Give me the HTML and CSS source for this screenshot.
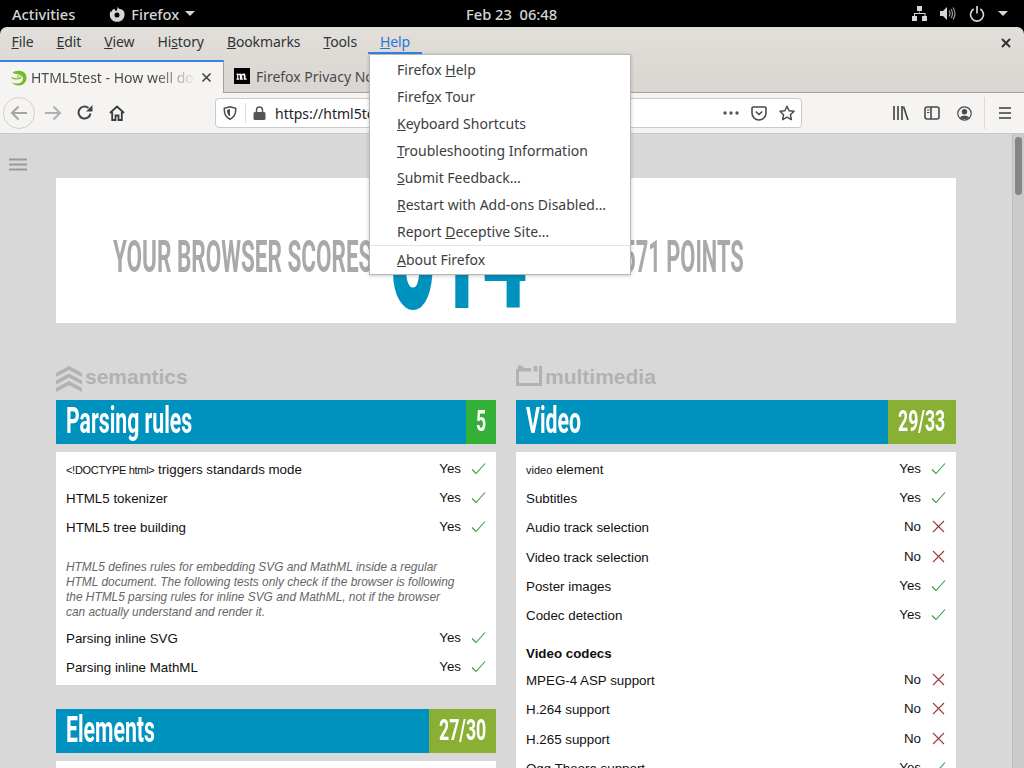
FILE: index.html
```html
<!DOCTYPE html>
<html lang="en">
<head>
    <meta charset="UTF-8">
    <title>HTML5test - How well does your browser support HTML5?</title>
    <link rel="stylesheet" href="styles.css">
</head>
<body>
    <svg class="defs" width="0" height="0">
        <symbol id="check" viewBox="0 0 15 13"><path d="M1 7.5l4 4L14 1.5" fill="none" stroke="#3a9a3c" stroke-width="1.1"/></symbol>
        <symbol id="cross" viewBox="0 0 13 13"><path d="M1 1l11 11M12 1L1 12" fill="none" stroke="#9a3a3c" stroke-width="1.1"/></symbol>
    </svg>

    <header class="topbar">
        <span class="activities">Activities</span>
        <span class="app-menu">
            <svg width="16" height="16" viewBox="0 0 16 16"><path d="M8.5 0.5c.3 1.3 1 2 2.2 2.6C12.4 3 14 4 15 5.5c1.300 3.500 .3 7-2.300 9C10 16.300 6 16.300 3.300 14.300.5 12 0 8 1.800 5l1 .7.600-2c.7-.5 1.500-.8 2.300-1-.2 1.200.5 2 1.300 2.300C8.800 4.500 8.200 2.500 8.500.5zM8 6.500A2.500 2.500 0 1 0 10.500 9 2.500 2.500 0 0 0 8 6.500z" fill="#d6d6d6"/></svg>
            <span>Firefox</span>
            <i class="caret"></i>
        </span>
        <span class="clock">Feb 23&nbsp; 06:48</span>
        <span class="tray">
            <svg width="15" height="15" viewBox="0 0 15 15" fill="#d6d6d6"><path d="M5 0h5v5H8v2h5.500v3h1.500v5h-5v-5h2.500V8H3v2h2v5H0v-5h2V7h5.500V5H5z"/></svg>
            <svg width="16" height="15" viewBox="0 0 16 15"><path d="M0 5h3l4-4v13l-4-4H0z" fill="#d6d6d6"/><path d="M9 4.500q2 3 0 6M11 3q3 4.500 0 9M13 1.500q4 6 0 12" fill="none" stroke="#9a9a9a" stroke-width="1.200"/></svg>
            <svg width="16" height="16" viewBox="0 0 16 16"><path d="M4.700 3A6.500 6.500 0 1 0 11.300 3M8 0v7.500" fill="none" stroke="#d6d6d6" stroke-width="1.700"/></svg>
            <i class="caret"></i>
        </span>
    </header>

    <div class="window">
        <div class="chrome-top">
            <nav class="menubar">
                <span><u>F</u>ile</span>
                <span><u>E</u>dit</span>
                <span><u>V</u>iew</span>
                <span>Hi<u>s</u>tory</span>
                <span><u>B</u>ookmarks</span>
                <span><u>T</u>ools</span>
                <span class="open"><u>H</u>elp</span>
                <svg class="win-close" width="10" height="10" viewBox="0 0 10 10"><path d="M1 1l8 8M9 1L1 9" stroke="#2e3436" stroke-width="2"/></svg>
            </nav>

            <div class="tabs">
                <div class="tab active">
                    <svg class="favicon" width="16" height="16" viewBox="0 0 16 16"><path d="M1.500 2.500C3 1.500 5 .8 8 .8c4.500 0 7.500 3 7.500 7.200S12 15.500 8 15.500C4.500 15.500 2 14 .5 12.500c3 1 6.500 1.300 9 .2 1.500-.8 2.500-2.200 2.500-4.200 0-3-2.500-4.500-5-4.500-2 0-4-.5-5.500-1.500z" fill="#73ba25"/><path d="M.5 7.500c2.500 1.500 6 1.800 9 .5" fill="none" stroke="#73ba25" stroke-width="1.300"/><circle cx="8.500" cy="6.500" r="1.800" fill="none" stroke="#73ba25"/></svg>
                    <span class="tab-title">HTML5test - How well does your browser</span>
                    <svg class="tab-close" width="11" height="11" viewBox="0 0 11 11"><path d="M1.500 1.500l8 8M9.500 1.500l-8 8" stroke="#3b3b3b" stroke-width="1.500"/></svg>
                </div>
                <div class="tab">
                    <svg class="favicon" width="16" height="16" viewBox="0 0 16 16"><rect width="16" height="16" fill="#000"/><path d="M2.500 5.500h2v1c.8-1.300 2.500-1.400 3.200 0 .9-1.400 3.800-1.500 3.800 1v3h1.200v1.200H9.800V8c0-1.300-1.600-1.300-1.600.2v2.300h.7v1.200H5.800V8c0-1.300-1.500-1.300-1.500.2v2.300h.9v1.200H2.500v-1.200h.6V6.700h-.6z" fill="#fff"/></svg>
                    <span class="tab-title">Firefox Privacy Notice</span>
                </div>
            </div>
        </div>

        <div class="toolbar">
            <div class="nav-buttons">
                <span class="back">
                    <svg width="18" height="16" viewBox="0 0 18 16"><path d="M17 8H2M8.500 1.500L2 8l6.500 6.500" fill="none" stroke="#a5a5a5" stroke-width="2"/></svg>
                </span>
                <svg class="forward" width="17" height="16" viewBox="0 0 17 16"><path d="M0 8h15M8.500 1.500L15 8l-6.500 6.500" fill="none" stroke="#b0b0b0" stroke-width="2"/></svg>
                <svg class="reload" width="16" height="16" viewBox="0 0 16 16"><path d="M13.500 8.500A6 6 0 1 1 11.500 3" fill="none" stroke="#444" stroke-width="2"/><path d="M9 6.500h6.500V0z" fill="#444"/></svg>
                <svg class="home" width="16" height="16" viewBox="0 0 16 16"><path d="M1 8l7-6.500L15 8M3.200 7v8h3.300v-4.500h3V15h3.300V7" fill="none" stroke="#3b3b3b" stroke-width="1.800"/></svg>
            </div>
            <div class="urlbar">
                <svg width="14" height="14" viewBox="0 0 14 14"><path d="M7 .8l5.700 1.500C13 7 11 11.500 7 13.200 3 11.500 1 7 1.300 2.300z" fill="none" stroke="#4a4a4a" stroke-width="1.500"/><path d="M7 3v7.500C5 9.500 4 7 4 4z" fill="#4a4a4a"/></svg>
                <i class="url-sep"></i>
                <svg class="lock" width="13" height="14" viewBox="0 0 13 14"><path d="M3.500 6V4a3 3 0 0 1 6 0v2" fill="none" stroke="#555" stroke-width="1.500"/><rect x=".5" y="6" width="12" height="8" rx="1.500" fill="#555"/></svg>
                <span class="url">https://html5test.com</span>
                <span class="url-actions">
                    <svg width="16" height="4" viewBox="0 0 16 4" fill="#555"><circle cx="2" cy="2" r="1.700"/><circle cx="8" cy="2" r="1.700"/><circle cx="14" cy="2" r="1.700"/></svg>
                    <svg width="16" height="15" viewBox="0 0 16 15"><path d="M1 2.200C1 1.500 1.500 1 2.200 1h11.600c.7 0 1.200.5 1.200 1.200V7a7 7 0 0 1-14 0z" fill="none" stroke="#4a4a4a" stroke-width="1.600"/><path d="M4.800 5.500L8 8.500l3.200-3" fill="none" stroke="#4a4a4a" stroke-width="1.600"/></svg>
                    <svg width="16" height="16" viewBox="0 0 16 16"><path d="M8 1.200l2.100 4.500 4.900.6-3.600 3.400.9 4.900L8 12.200l-4.300 2.400.9-4.900L1 6.300l4.900-.6z" fill="none" stroke="#4a4a4a" stroke-width="1.500" stroke-linejoin="round"/></svg>
                </span>
            </div>
            <div class="tools">
                <svg class="library" width="16" height="14" viewBox="0 0 16 14"><path d="M1 0v14M5 0v14M9 0v14M10.500 .5l4.500 13.500" fill="none" stroke="#4a4a4a" stroke-width="1.700"/></svg>
                <svg class="sidebar" width="16" height="14" viewBox="0 0 16 14"><rect x="1" y="1" width="14" height="12" rx="2" fill="none" stroke="#4a4a4a" stroke-width="1.600"/><path d="M7 1v12" stroke="#4a4a4a" stroke-width="1.600"/><path d="M3 4h2.500M3 6.500h2.500" stroke="#4a4a4a"/></svg>
                <svg width="15" height="15" viewBox="0 0 15 15"><circle cx="7.500" cy="7.500" r="6.700" fill="none" stroke="#4a4a4a" stroke-width="1.200"/><circle cx="7.500" cy="5.800" r="2.700" fill="#4a4a4a"/><path d="M3 11.500c1-2.300 8-2.300 9 0-2 2-7 2-9 0z" fill="#4a4a4a"/></svg>
                <i class="tool-sep"></i>
                <svg width="14" height="12" viewBox="0 0 14 12"><path d="M1 1h12M1 6h12M1 11h12" stroke="#3b3b3b" stroke-width="1.700"/></svg>
            </div>
        </div>

        <div class="viewport">
            <main class="page">
                <svg class="page-menu" width="18" height="13" viewBox="0 0 18 13"><path d="M0 1.500h18M0 6.500h18M0 11.500h18" stroke="#999" stroke-width="2.200"/></svg>

                <section class="score-card">
                    <span class="score-side"><b class="squeeze">YOUR BROWSER SCORES</b></span>
                    <span class="score-number"><b class="squeeze">514</b></span>
                    <span class="score-side right"><b class="squeeze">OUT OF 571 POINTS</b></span>
                </section>

                <div class="columns">
                    <div class="column">
                        <h2 class="category">
                            <svg class="icon-semantics" width="26" height="26" viewBox="0 0 26 26" fill="#b2b2b2"><path d="M13 0l13 7v4L13 4 0 11V7zM13 7.500l13 7v4l-13-7-13 7v-4zM13 15l13 7v4l-13-7-13 7v-4z"/></svg>
                            semantics
                        </h2>

                        <div class="block-head">
                            <h3><span class="squeeze">Parsing rules</span></h3>
                            <span class="points full"><span class="squeeze">5</span></span>
                        </div>
                        <ul class="tests">
                            <li><span class="label"><span class="tag doctype">&lt;!DOCTYPE html&gt;</span> triggers standards mode</span><span class="result">Yes</span><svg class="mark"><use href="#check"/></svg></li>
                            <li><span class="label">HTML5 tokenizer</span><span class="result">Yes</span><svg class="mark"><use href="#check"/></svg></li>
                            <li><span class="label">HTML5 tree building</span><span class="result">Yes</span><svg class="mark"><use href="#check"/></svg></li>
                            <li class="note">HTML5 defines rules for embedding SVG and MathML inside a regular HTML document. The following tests only check if the browser is following the HTML5 parsing rules for inline SVG and MathML, not if the browser can actually understand and render it.</li>
                            <li><span class="label">Parsing inline SVG</span><span class="result">Yes</span><svg class="mark"><use href="#check"/></svg></li>
                            <li><span class="label">Parsing inline MathML</span><span class="result">Yes</span><svg class="mark"><use href="#check"/></svg></li>
                        </ul>

                        <div class="block-head">
                            <h3><span class="squeeze">Elements</span></h3>
                            <span class="points partial narrow"><span class="squeeze">27/30</span></span>
                        </div>
                        <ul class="tests">
                            <li><span class="label">Embedding custom non-visible data</span><span class="result">Yes</span><svg class="mark"><use href="#check"/></svg></li>
                        </ul>
                    </div>

                    <div class="column">
                        <h2 class="category">
                            <svg class="icon-multimedia" width="26" height="21" viewBox="0 0 26 21"><path d="M1.500 4v15.500h23V1" fill="none" stroke="#b2b2b2" stroke-width="3"/><path d="M1 6.500h14V3H8.500l-3-2.500H2zM17.500 1h4v5.500h-4z" fill="#b2b2b2"/></svg>
                            multimedia
                        </h2>

                        <div class="block-head">
                            <h3><span class="squeeze">Video</span></h3>
                            <span class="points partial"><span class="squeeze">29/33</span></span>
                        </div>
                        <ul class="tests">
                            <li><span class="label"><span class="tag">video</span> element</span><span class="result">Yes</span><svg class="mark"><use href="#check"/></svg></li>
                            <li><span class="label">Subtitles</span><span class="result">Yes</span><svg class="mark"><use href="#check"/></svg></li>
                            <li><span class="label">Audio track selection</span><span class="result">No</span><svg class="mark"><use href="#cross"/></svg></li>
                            <li><span class="label">Video track selection</span><span class="result">No</span><svg class="mark"><use href="#cross"/></svg></li>
                            <li><span class="label">Poster images</span><span class="result">Yes</span><svg class="mark"><use href="#check"/></svg></li>
                            <li><span class="label">Codec detection</span><span class="result">Yes</span><svg class="mark"><use href="#check"/></svg></li>
                            <li class="sub-head">Video codecs</li>
                            <li><span class="label">MPEG-4 ASP support</span><span class="result">No</span><svg class="mark"><use href="#cross"/></svg></li>
                            <li><span class="label">H.264 support</span><span class="result">No</span><svg class="mark"><use href="#cross"/></svg></li>
                            <li><span class="label">H.265 support</span><span class="result">No</span><svg class="mark"><use href="#cross"/></svg></li>
                            <li><span class="label">Ogg Theora support</span><span class="result">Yes</span><svg class="mark"><use href="#check"/></svg></li>
                        </ul>
                    </div>
                </div>
            </main>
            <div class="scrollbar"><i class="thumb"></i></div>
        </div>
    </div>

    <!-- dropdown of the Help menu -->
    <ul class="help-menu">
        <li>Firefox <u>H</u>elp</li>
        <li>Firef<u>o</u>x Tour</li>
        <li><u>K</u>eyboard Shortcuts</li>
        <li><u>T</u>roubleshooting Information</li>
        <li><u>S</u>ubmit Feedback…</li>
        <li><u>R</u>estart with Add-ons Disabled…</li>
        <li>Report <u>D</u>eceptive Site…</li>
        <li class="divider"></li>
        <li><u>A</u>bout Firefox</li>
    </ul>
</body>
</html>
```

FILE: styles.css
```css
/* desktop and browser chrome */

html, body {
    height: 100%;
}

body {
    margin: 0;
    background-color: #000;
    font-family: "Noto Sans", sans-serif;
    overflow: hidden;
    position: relative;
}

.defs {
    position: absolute;
}

.topbar {
    height: 27px;
    color: #d6d6d6;
    font-size: 14.700px;
    font-weight: 500;
    display: flex;
    align-items: center;
    position: relative;
}

.activities {
    margin-left: 12px;
}

.app-menu {
    margin-left: 34px;
    display: flex;
    align-items: center;
    gap: 6px;
}

.caret {
    width: 0;
    height: 0;
    border-left: 5px solid transparent;
    border-right: 5px solid transparent;
    border-top: 5px solid #d6d6d6;
}

.clock {
    position: absolute;
    left: 466px;
}

.tray {
    margin-left: auto;
    margin-right: 16px;
    display: flex;
    align-items: center;
    gap: 13px;
}

.window {
    height: 741px;
    display: flex;
    flex-direction: column;
    border-radius: 7px 7px 0 0;
    overflow: hidden;
}

.chrome-top {
    background: linear-gradient(#e2dfdb, #d9d6d2);
    border-bottom: 1px solid #a3a19c;
}

.menubar {
    height: 27px;
    display: flex;
    align-items: center;
    color: #2e3436;
    font-size: 14px;
    letter-spacing: -0.1px;
    position: relative;
}

.menubar span {
    padding: 0 11.5px;
    height: 27px;
    line-height: 29px;
    box-sizing: border-box;
}

.menubar .open {
    color: #2a76d8;
    border-bottom: 2px solid #3584e4;
}

.win-close {
    margin-left: auto;
    margin-right: 13px;
    margin-top: 4px;
}

.tabs {
    height: 38px;
    box-sizing: border-box;
    padding-top: 6px;
    display: flex;
}

.tab {
    width: 224px;
    box-sizing: border-box;
    display: flex;
    align-items: center;
    padding-left: 10px;
    font-size: 14px;
    color: #4a4a4a;
}

.tab.active {
    background-color: #f5f4f2;
    border-top: 2px solid #3584e4;
    border-right: 1px solid #a3a19c;
    margin-bottom: -1px;
    padding-left: 11px;
}

.tab-title {
    margin-left: 6px;
    white-space: nowrap;
    overflow: hidden;
    flex: 1;
}

.tab.active .tab-title {
    margin-left: 4px;
    -webkit-mask-image: linear-gradient(to right, #000 125px, transparent 165px);
    mask-image: linear-gradient(to right, #000 125px, transparent 165px);
}

.tab-close {
    margin: 0 11px 0 6px;
}

.toolbar {
    height: 41px;
    box-sizing: border-box;
    background-color: #f5f4f2;
    border-bottom: 1px solid #cdc9c5;
    display: flex;
    align-items: center;
}

.nav-buttons {
    width: 215px;
    display: flex;
    align-items: center;
    padding-left: 3px;
    box-sizing: border-box;
}

.back {
    width: 32px;
    height: 32px;
    box-sizing: border-box;
    border: 1px solid #d2d0cc;
    border-radius: 50%;
    display: flex;
    align-items: center;
    justify-content: center;
}

.forward {
    margin-left: 10px;
}

.reload {
    margin-left: 15px;
}

.home {
    margin-left: 16px;
}

.urlbar {
    width: 587px;
    height: 30px;
    box-sizing: border-box;
    background-color: #fff;
    border: 1px solid #cdc9c5;
    border-radius: 4px;
    display: flex;
    align-items: center;
    padding-left: 7px;
    font-size: 14px;
    color: #222;
}

.url-sep {
    width: 1px;
    height: 20px;
    background-color: #ddd;
    margin-left: 8px;
}

.lock {
    margin-left: 7px;
}

.url {
    margin-left: 9px;
}

.url-actions {
    margin-left: auto;
    margin-right: 6px;
    display: flex;
    align-items: center;
    gap: 12px;
}

.tools {
    flex: 1;
    display: flex;
    align-items: center;
    padding-left: 91px;
    gap: 16px;
}

.library {
    margin-right: -1px;
}

.sidebar {
    margin-right: 1px;
}

.tool-sep {
    width: 1px;
    height: 32px;
    background-color: #dcdad6;
    margin: 0 -3px 0 -4px;
}

/* the page itself */

.viewport {
    flex: 1;
    min-height: 0;
    display: flex;
}

.page {
    flex: 1;
    min-width: 0;
    box-sizing: border-box;
    background-color: #d8d8d8;
    padding: 44px 56px 0;
    position: relative;
    overflow: hidden;
    font-family: "Liberation Sans", Arial, sans-serif;
}

.page-menu {
    position: absolute;
    left: 9px;
    top: 24px;
}

.scrollbar {
    width: 12px;
    box-sizing: border-box;
    background-color: #cbcbcb;
    border-left: 1px solid #c2bfbb;
    padding: 3px 2px 0 2px;
}

.thumb {
    display: block;
    height: 58px;
    background-color: #828686;
    border-radius: 4px;
}

/* condensed display type, no such face is installed */
.squeeze {
    display: inline-block;
    font-family: "Roboto", "Liberation Sans", sans-serif;
    white-space: nowrap;
    font-weight: 700;
    transform: scaleX(0.59);
    transform-origin: left center;
}

.score-card {
    width: 900px;
    height: 145px;
    background-color: #fff;
    display: flex;
    align-items: flex-start;
    padding-left: 57px;
    box-sizing: border-box;
}

.score-side {
    width: 277px;
    margin-top: 56px;
    font-size: 45px;
    line-height: 46px;
    color: #a9a9a9;
    white-space: nowrap;
}

.score-side .squeeze {
    transform: scaleX(0.5);
}

.score-side.right {
    width: 217px;
    display: flex;
    justify-content: flex-end;
}

.score-side.right .squeeze {
    transform: scaleX(0.485);
    transform-origin: right center;
}

.score-number {
    width: 137px;
    margin-top: 1px;
    font-size: 176px;
    line-height: 136px;
    color: #0092bf;
}

.score-number .squeeze {
    font-weight: 900;
    transform: scaleX(0.45);
}

.columns {
    display: flex;
    gap: 20px;
    margin-top: 40px;
}

.column {
    width: 440px;
}

.category {
    margin: 0 0 11px;
    height: 26px;
    display: flex;
    align-items: center;
    gap: 3px;
    font-size: 21px;
    line-height: 25px;
    font-weight: 700;
    color: #b2b2b2;
}

.icon-semantics {
    margin-top: 6px;
}

.icon-multimedia {
    margin-bottom: 2px;
}

.block-head {
    height: 44px;
    background-color: #0092bf;
    color: #fff;
    display: flex;
    justify-content: space-between;
}

.block-head h3 {
    margin: 0;
    padding-left: 10px;
    font-size: 36px;
    font-weight: normal;
    line-height: 42px;
}

.points {
    font-size: 30px;
    line-height: 42px;
    box-sizing: border-box;
    padding-left: 10px;
}

.points.full {
    width: 30px;
    background-color: #33b035;
}

.points.partial {
    width: 68px;
    background-color: #89b035;
}

.points.narrow {
    width: 67px;
}

.tests {
    list-style: none;
    margin: 8px 0 24px;
    padding: 2.700px 10px 2.550px;
    background-color: #fff;
    color: #111;
    font-size: 13.330px;
}

.tests li {
    height: 29.250px;
    display: flex;
    align-items: center;
}

.label {
    flex: 1;
}

.tag {
    font-size: 11px;
}

.tag.doctype {
    letter-spacing: -0.3px;
}

.result {
    margin-bottom: 2px;
}

.mark {
    width: 15px;
    height: 13px;
    margin: 0 0 2px 10px;
}

.tests .note {
    height: auto;
    display: block;
    margin: 18px 25px 3.500px 0;
    font-size: 11.900px;
    line-height: 15px;
    font-style: italic;
    color: #666;
}

.tests .sub-head {
    height: 22px;
    padding: 12px 0 1.800px;
    font-weight: 700;
}

/* dropdown */

.help-menu {
    position: absolute;
    left: 369px;
    top: 54px;
    width: 262px;
    height: 221px;
    box-sizing: border-box;
    margin: 0;
    padding: 1px 0 0;
    list-style: none;
    background-color: #fff;
    border: 1px solid #b9b7b3;
    box-shadow: 0 1px 4px rgba(0, 0, 0, 0.2);
    color: #3d3d3d;
    font-size: 14px;
}

.help-menu li {
    height: 27px;
    line-height: 27px;
    padding-left: 27px;
    white-space: nowrap;
}

.help-menu .divider {
    height: 1px;
    padding: 0;
    margin-bottom: 0;
    background-color: #e4e4e4;
}
```
